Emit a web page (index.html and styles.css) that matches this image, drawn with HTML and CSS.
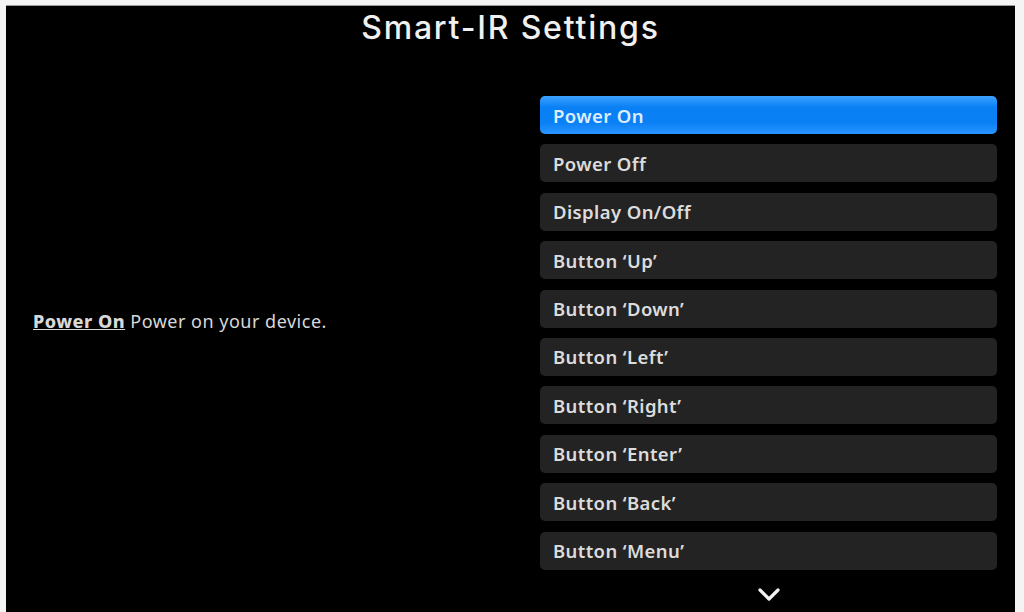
FILE: index.html
```html
<!DOCTYPE html>
<html lang="en">
<head>
  <meta charset="UTF-8" />
  <meta name="viewport" content="width=device-width, initial-scale=1.0" />
  <title>Smart-IR Settings</title>
  <link rel="stylesheet" href="styles.css">
</head>
<body>
  <div class="screen">
    <h1 class="title">Smart-IR Settings</h1>
    <div class="main">
      <div class="help">
        <p><span class="help-name">Power On</span> Power on your device.</p>
      </div>
      <div class="menu">
        <ul class="commands">
          <li class="command selected">Power On</li>
          <li class="command">Power Off</li>
          <li class="command">Display On/Off</li>
          <li class="command">Button &lsquo;Up&rsquo;</li>
          <li class="command">Button &lsquo;Down&rsquo;</li>
          <li class="command">Button &lsquo;Left&rsquo;</li>
          <li class="command">Button &lsquo;Right&rsquo;</li>
          <li class="command">Button &lsquo;Enter&rsquo;</li>
          <li class="command">Button &lsquo;Back&rsquo;</li>
          <li class="command">Button &lsquo;Menu&rsquo;</li>
        </ul>
        <div class="more">
          <svg width="24" height="16" viewBox="0 0 24 16">
            <polyline points="3,3 12,12 21,3" fill="none" stroke="#f2f2f2" stroke-width="3.2" stroke-linecap="round" stroke-linejoin="round" />
          </svg>
        </div>
      </div>
    </div>
  </div>
</body>
</html>
```

FILE: styles.css
```css
html, body {
  margin: 0;
  height: 100%;
  overflow: hidden;
}
body {
  background-color: #f4f4f4;
  font-family: "Noto Sans", sans-serif;
  padding: 5px 9px 0 6px;
  box-sizing: border-box;
}
.screen {
  background-color: #000;
  height: 100%;
  border-top: 1px solid #9a9a9a;
  box-sizing: border-box;
}
.title {
  margin: 0;
  padding-top: 2px;
  height: 84px;
  box-sizing: border-box;
  text-align: center;
  color: #f0f0f0;
  font-family: Inter, sans-serif;
  font-size: 32px;
  font-weight: 500;
  letter-spacing: 1.8px;
}
.main {
  display: flex;
  padding-top: 6px;
}
.help {
  flex: 1;
  display: flex;
  align-items: center;
  padding-left: 27px;
  padding-bottom: 56px;
}
.help p {
  margin: 0;
  color: #d8d8d8;
  font-size: 18px;
  letter-spacing: 0.5px;
}
.help-name {
  font-weight: 800;
  text-decoration: underline;
}
.menu {
  width: 457px;
  margin-right: 18px;
}
.commands {
  list-style: none;
  margin: 0;
  padding: 0;
  display: grid;
  row-gap: 10.4px;
}
.command {
  height: 38px;
  display: flex;
  align-items: center;
  padding-left: 13px;
  background-color: #232323;
  border-radius: 5px;
  color: #dcdcdc;
  font-size: 18.5px;
  font-weight: 600;
  letter-spacing: 0.4px;
}
.command.selected {
  background: linear-gradient(#3da2ff, #0a80f5 30%, #0a80f5 70%, #2a95ff);
  color: #dceeff;
}
.more {
  display: flex;
  justify-content: center;
  padding-top: 17px;
}
```
